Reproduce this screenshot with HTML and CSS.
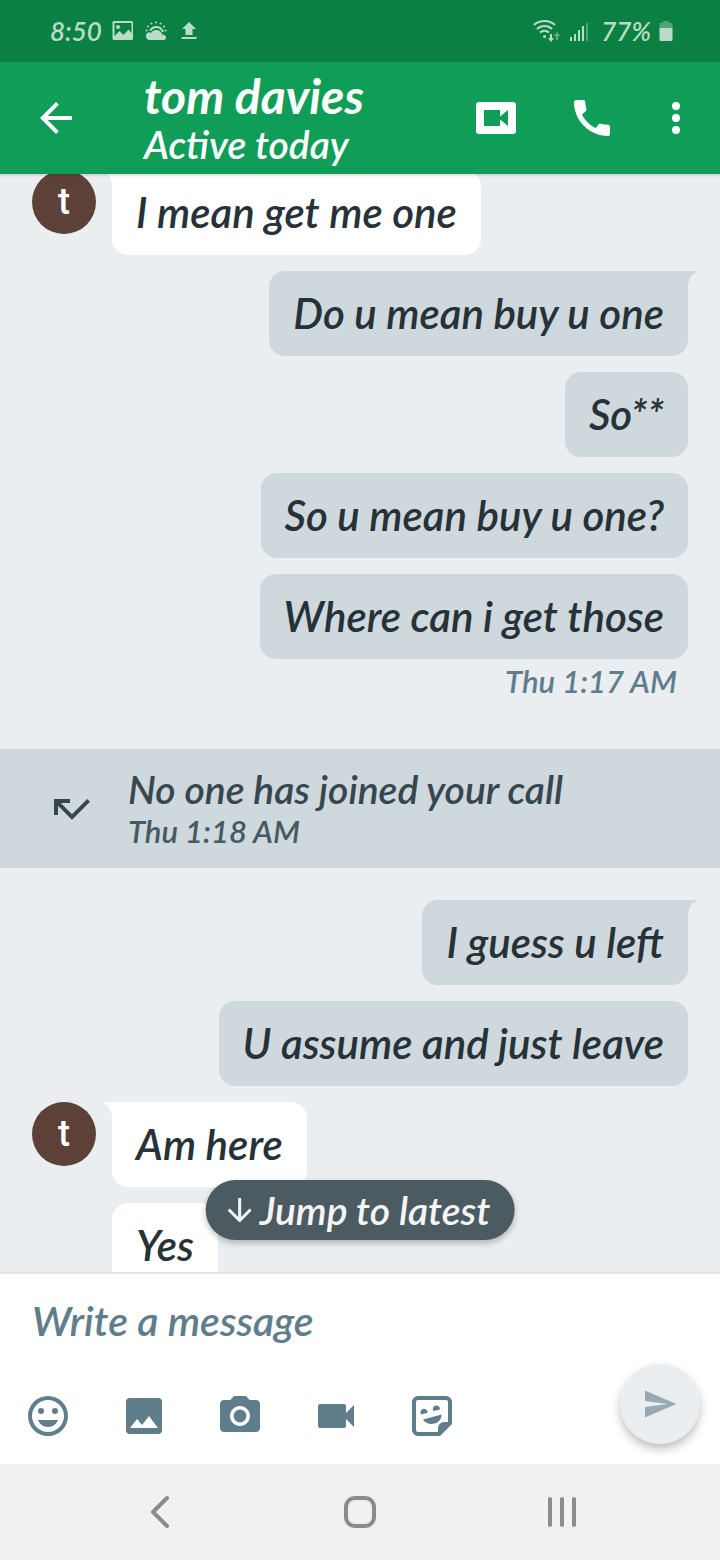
FILE: index.html
```html
<!DOCTYPE html>
<html lang="en">
<head>
    <meta charset="UTF-8">
    <meta name="viewport" content="width=device-width, initial-scale=1.0">
    <title>tom davies</title>
    <link rel="stylesheet" href="styles.css">
</head>
<body>

<!-- Phone status bar -->
<div class="status-bar">
    <div class="status-group">
        <span class="status-text">8:50</span>
        <svg class="status-icon" viewBox="0 0 24 24"><path fill-rule="evenodd" d="M3 2h17.500a1.500 1.500 0 0 1 1.500 1.500v16a1.500 1.500 0 0 1-1.500 1.500H3a1.500 1.500 0 0 1-1.500-1.500v-16A1.500 1.500 0 0 1 3 2zM3.500 4v13l5-5 4 4 5-5.500 3 3.500V4zM7 6a2 2 0 1 1 0 4 2 2 0 0 1 0-4z"/></svg>
        <svg class="status-icon" viewBox="0 0 24 24"><path d="M5 21a4 4 0 0 1-1-7.500c1-.5 2 0 3 .5 1-2 3-3 5.500-3s5 2 5.500 4.500c3 0 4 1.500 4 3a2.500 2.500 0 0 1-2.500 2.500z"/><path d="M6 11.500c1.500-2 3.500-3.500 6-3.500 3 0 6 2 7 5" fill="none" stroke="currentColor" stroke-width="2"/><circle cx="12" cy="3.500" r="1"/><circle cx="7.500" cy="4.500" r="1"/><circle cx="16.500" cy="4.500" r="1"/><circle cx="4" cy="7.500" r="1"/><circle cx="20" cy="7.500" r="1"/><circle cx="2.500" cy="11.500" r="1"/><circle cx="21.500" cy="11.500" r="1"/></svg>
        <svg class="status-icon" viewBox="0 0 24 24"><path d="M12 3l7 7h-3.500v6h-7v-6H5zM4.500 18h15v2h-15z"/></svg>
    </div>
    <div class="status-group status-right">
        <svg class="status-wifi" viewBox="0 0 28 24"><g fill="none" stroke="currentColor" stroke-width="2"><path d="M1 6a16 16 0 0 1 21 0"/><path d="M4 10a11 11 0 0 1 15 0"/><path d="M7 13.500a6.500 6.500 0 0 1 9 0"/></g><circle cx="11.500" cy="17.500" r="1.500"/><path d="M17 15h2v4h2l-3 4-3-4h2z"/><path opacity=".5" d="M23 21h2v-4h2l-3-4-3 4h2z"/></svg>
        <svg class="status-signal" viewBox="0 0 20 24"><path d="M1 18h2v4H1zM5 15h2v7H5zM9 11h2v11H9zM13 7h2v15h-2z"/><path opacity=".4" d="M17 4h2v18h-2z"/></svg>
        <span class="status-text status-battery">77%</span>
        <svg class="status-cell" viewBox="0 0 14 24"><path opacity=".4" d="M4 2h6v2h3.500v5H.5V4H4z"/><path d="M.5 9h13v12a1 1 0 0 1-1 1h-11a1 1 0 0 1-1-1z"/></svg>
    </div>
</div>

<!-- Conversation header -->
<header class="app-bar">
    <button class="icon-button" aria-label="Back">
        <svg viewBox="0 0 24 24"><path d="M20 11H7.830l5.590-5.590L12 4l-8 8 8 8 1.410-1.410L7.830 13H20z"/></svg>
    </button>
    <div class="contact">
        <h1 class="contact-name">tom davies</h1>
        <p class="contact-status">Active today</p>
    </div>
    <div class="app-actions">
        <button class="icon-button" aria-label="Video call">
            <svg viewBox="0 0 24 24"><path fill-rule="evenodd" d="M3.500 4h17A1.500 1.500 0 0 1 22 5.500v13a1.500 1.500 0 0 1-1.500 1.500h-17A1.500 1.500 0 0 1 2 18.500v-13A1.500 1.500 0 0 1 3.500 4zM6 8v8h8v-3.200l4 3.200V8l-4 3.200V8z"/></svg>
        </button>
        <button class="icon-button" aria-label="Call">
            <svg viewBox="0 0 24 24"><path d="M20.010 15.380c-1.230 0-2.420-.2-3.530-.56-.35-.12-.74-.03-1.010.24l-1.570 1.970c-2.830-1.350-5.480-3.900-6.890-6.830l1.950-1.660c.27-.28.350-.67.240-1.020-.37-1.110-.56-2.300-.56-3.530 0-.54-.45-.99-.99-.99H4.190C3.650 3 3 3.240 3 3.990 3 13.280 10.730 21 20.010 21c.71 0 .99-.63.990-1.180v-3.450c0-.54-.45-.99-.99-.99z"/></svg>
        </button>
        <button class="icon-button icon-more" aria-label="More options">
            <svg viewBox="0 0 24 24"><path d="M12 8a2 2 0 1 0 0-4 2 2 0 0 0 0 4zm0 2a2 2 0 1 0 0 4 2 2 0 0 0 0-4zm0 6a2 2 0 1 0 0 4 2 2 0 0 0 0-4z"/></svg>
        </button>
    </div>
</header>

<!-- Messages -->
<main class="chat">
    <div class="thread">
        <div class="group received">
            <span class="avatar">t</span>
            <div class="bubbles">
                <p class="bubble tail">I mean get me one</p>
            </div>
        </div>

        <div class="group sent">
            <p class="bubble tail">Do u mean buy u one</p>
            <p class="bubble">So**</p>
            <p class="bubble">So u mean buy u one?</p>
            <p class="bubble">Where can i get those</p>
        </div>
        <time class="timestamp">Thu 1:17 AM</time>

        <div class="call-notice">
            <svg class="call-icon" viewBox="0 0 24 24"><path d="M19.590 7L12 14.590 6.410 9H11V7H3v8h2v-4.590l7 7 9-9z"/></svg>
            <div>
                <p class="call-title">No one has joined your call</p>
                <time class="call-time">Thu 1:18 AM</time>
            </div>
        </div>

        <div class="group sent">
            <p class="bubble tail">I guess u left</p>
            <p class="bubble">U assume and just leave</p>
        </div>

        <div class="group received">
            <span class="avatar">t</span>
            <div class="bubbles">
                <p class="bubble tail">Am here</p>
                <p class="bubble">Yes</p>
            </div>
        </div>
    </div>

    <button class="jump-button">
        <svg class="jump-icon" viewBox="0 0 24 24"><path d="M12 0v22M1 11.500l11 11 11-11"/></svg>
        Jump to latest
    </button>
</main>

<!-- Composer -->
<form class="composer">
    <input class="message-input" type="text" placeholder="Write a message" aria-label="Write a message">
    <div class="composer-row">
        <div class="tools">
            <button type="button" class="icon-button" aria-label="Emoji">
                <svg viewBox="0 0 24 24"><path fill-rule="evenodd" d="M12 2a10 10 0 1 0 0 20 10 10 0 0 0 0-20zm0 18a8 8 0 1 1 0-16 8 8 0 0 1 0 16z"/><circle cx="8.500" cy="9.500" r="1.500"/><circle cx="15.500" cy="9.500" r="1.500"/><path d="M7 14h10c-.7 2.100-2.700 3.500-5 3.500S7.700 16.100 7 14z"/></svg>
            </button>
            <button type="button" class="icon-button" aria-label="Photos">
                <svg viewBox="0 0 24 24"><path fill-rule="evenodd" d="M5 3h14a2 2 0 0 1 2 2v14a2 2 0 0 1-2 2H5a2 2 0 0 1-2-2V5a2 2 0 0 1 2-2zm0 15h14l-4.500-6-3.500 4.500-2.500-3z"/></svg>
            </button>
            <button type="button" class="icon-button" aria-label="Camera">
                <svg viewBox="0 0 24 24"><circle cx="12" cy="12" r="3.200"/><path d="M9 2L7.170 4H4c-1.100 0-2 .9-2 2v12c0 1.100.9 2 2 2h16c1.100 0 2-.9 2-2V6c0-1.100-.9-2-2-2h-3.170L15 2H9zm3 15c-2.760 0-5-2.240-5-5s2.240-5 5-5 5 2.240 5 5-2.240 5-5 5z"/></svg>
            </button>
            <button type="button" class="icon-button" aria-label="Video">
                <svg viewBox="0 0 24 24"><path d="M17 10.500V7c0-.55-.45-1-1-1H4c-.55 0-1 .45-1 1v10c0 .55.450 1 1 1h12c.55 0 1-.45 1-1v-3.500l4 4v-11l-4 4z"/></svg>
            </button>
            <button type="button" class="icon-button" aria-label="Stickers">
                <svg viewBox="0 0 24 24"><path fill-rule="evenodd" d="M5 2h14a3 3 0 0 1 3 3v11l-6 6H5a3 3 0 0 1-3-3V5a3 3 0 0 1 3-3zm0 2a1 1 0 0 0-1 1v14a1 1 0 0 0 1 1h10v-2a3 3 0 0 1 3-3h2V5a1 1 0 0 0-1-1z"/><path d="M6.500 11.200a1.800 1.800 0 1 1 3.300-.8zM12.700 9.500a1.800 1.800 0 1 1 3.300-.8zM7.500 13.700l9.300-2.500c0 2.200-1.500 4.100-3.700 4.600-2.200.5-4.500-.3-5.600-2.100z"/></svg>
            </button>
        </div>
        <button type="submit" class="send-button" aria-label="Send">
            <svg viewBox="0 0 24 24"><path d="M2.010 21L23 12 2.010 3 2 10l15 2-15 2z"/></svg>
        </button>
    </div>
</form>

<!-- System navigation -->
<nav class="nav-bar">
    <button class="nav-button" aria-label="Back">
        <svg viewBox="0 0 36 36"><path d="M25 4L11 18l14 14"/></svg>
    </button>
    <button class="nav-button" aria-label="Home">
        <svg viewBox="0 0 36 36"><rect x="4" y="4" width="28" height="28" rx="9"/></svg>
    </button>
    <button class="nav-button" aria-label="Recents">
        <svg viewBox="0 0 36 36"><path d="M8 5v26M20 5v26M32 5v26"/></svg>
    </button>
</nav>

</body>
</html>
```
FILE: styles.css
```css
* {
    box-sizing: border-box;
}

body {
    display: flex;
    flex-direction: column;
    height: 100vh;
    margin: 0;
    font-family: Lato, "Open Sans", sans-serif;
    font-style: italic;
    font-weight: 600;
    color: #263238;
    background: #eaeef1;
}

h1, p {
    margin: 0;
}

button {
    padding: 0;
    border: none;
    background: none;
    color: inherit;
    font: inherit;
    cursor: pointer;
}

svg {
    display: block;
    fill: currentColor;
}

/* Status bar */
.status-bar {
    display: flex;
    justify-content: space-between;
    align-items: center;
    height: 62px;
    padding: 0 47px 0 50px;
    background: #0b8043;
    color: #b9dcc8;
}

.status-group {
    display: flex;
    align-items: center;
    gap: 9px;
}

.status-right {
    gap: 8px;
}

.status-text {
    font-size: 26px;
    line-height: 32px;
}

.status-battery {
    margin-left: 4px;
}

.status-icon {
    width: 24px;
    height: 24px;
}

.status-wifi {
    width: 28px;
    height: 24px;
}

.status-signal {
    width: 20px;
    height: 24px;
}

.status-cell {
    width: 14px;
    height: 24px;
}

/* Header */
.app-bar {
    position: relative;
    z-index: 1;
    display: flex;
    align-items: center;
    min-height: 112px;
    padding: 0 20px 0 32px;
    background: #0f9d58;
    color: #fff;
    box-shadow: 0 1px 3px rgba(0, 0, 0, 0.2);
}

.icon-button,
.icon-button svg {
    width: 48px;
    height: 48px;
}

.contact {
    flex: 1;
    padding-left: 64px;
}

.contact-name {
    font-size: 48px;
    line-height: 52px;
}

.contact-status {
    font-size: 39px;
    line-height: 44px;
}

.app-actions {
    display: flex;
    gap: 48px;
}

.icon-more {
    margin-left: -12px;
}

/* Messages */
.chat {
    position: relative;
    flex: 1;
    min-height: 0;
    overflow: hidden;
}

/* thread is scrolled slightly under the header */
.thread {
    display: flex;
    flex-direction: column;
    margin-top: -4px;
}

.group {
    display: flex;
    gap: 16px;
    margin-bottom: 16px;
    padding: 0 32px;
}

.sent {
    flex-direction: column;
    align-items: flex-end;
}

.bubbles {
    display: flex;
    flex-direction: column;
    align-items: flex-start;
    gap: 16px;
}

.avatar {
    flex: none;
    width: 64px;
    height: 64px;
    border-radius: 50%;
    background: #5d4037;
    color: #fff;
    font: 500 36px/64px Roboto, sans-serif;
    text-align: center;
}

.bubble {
    position: relative;
    padding: 16px 24px;
    border-radius: 16px;
    background: #fff;
    font-size: 42px;
    line-height: 53px;
}

.sent .bubble {
    background: #cfd8dd;
}

.tail::before {
    content: "";
    position: absolute;
    top: 0;
    width: 8px;
    height: 16px;
}

.received .tail {
    border-top-left-radius: 0;
}

.received .tail::before {
    right: 100%;
    background: radial-gradient(ellipse 8px 14px at 0 100%, transparent 96%, #fff);
}

.sent .tail {
    border-top-right-radius: 0;
}

.sent .tail::before {
    left: 100%;
    background: radial-gradient(ellipse 8px 14px at 100% 100%, transparent 96%, #cfd8dd);
}

.timestamp {
    align-self: flex-end;
    margin: -16px 43px 46px 0;
    font-size: 31px;
    line-height: 44px;
    color: #607d8b;
}

.call-notice {
    display: flex;
    align-items: center;
    gap: 32px;
    margin-bottom: 32px;
    padding: 18px 48px;
    background: #cfd8dd;
    color: #37474f;
}

.call-icon {
    width: 48px;
    height: 48px;
}

.call-title {
    font-size: 39px;
    line-height: 45px;
}

.call-time {
    display: block;
    font-size: 31px;
    line-height: 38px;
    color: #455a64;
}

.jump-button {
    position: absolute;
    bottom: 32px;
    left: 50%;
    display: flex;
    align-items: center;
    gap: 8px;
    height: 60px;
    padding: 0 24px 0 22px;
    border-radius: 30px;
    background: #4c5b62;
    color: #f5f5f5;
    font-size: 39px;
    white-space: nowrap;
    box-shadow: 0 3px 6px rgba(0, 0, 0, 0.25);
    transform: translateX(-50%);
}

.jump-icon {
    width: 24px;
    height: 24px;
    fill: none;
    stroke: currentColor;
    stroke-width: 3;
}

/* Composer */
.composer {
    padding: 16px 20px 20px 24px;
    border-top: 2px solid #e3e5e6;
    background: #fff;
    color: #607d8b;
}

.message-input {
    display: block;
    width: 100%;
    height: 60px;
    padding: 0 8px;
    border: none;
    outline: none;
    background: none;
    color: #263238;
    font: inherit;
    font-size: 41px;
}

.message-input::placeholder {
    color: #607d8b;
    opacity: 1;
}

.composer-row {
    display: flex;
    justify-content: space-between;
    align-items: flex-end;
    margin-top: 14px;
}

.tools {
    display: flex;
    gap: 48px;
    padding-bottom: 4px;
}

.send-button {
    display: flex;
    justify-content: center;
    align-items: center;
    width: 80px;
    height: 80px;
    border-radius: 50%;
    background: #eaeef1;
    color: #98abb4;
    box-shadow: 0 5px 10px rgba(0, 0, 0, 0.25);
}

.send-button svg {
    width: 36px;
    height: 36px;
}

/* System navigation */
.nav-bar {
    display: flex;
    height: 96px;
    padding: 0 60px;
    background: #f1f1f1;
    color: #8c8c8c;
}

.nav-button {
    flex: 1;
    display: flex;
    justify-content: center;
    align-items: center;
}

.nav-button svg {
    width: 36px;
    height: 36px;
    fill: none;
    stroke: currentColor;
    stroke-width: 4;
    stroke-linecap: round;
    stroke-linejoin: round;
}
```
